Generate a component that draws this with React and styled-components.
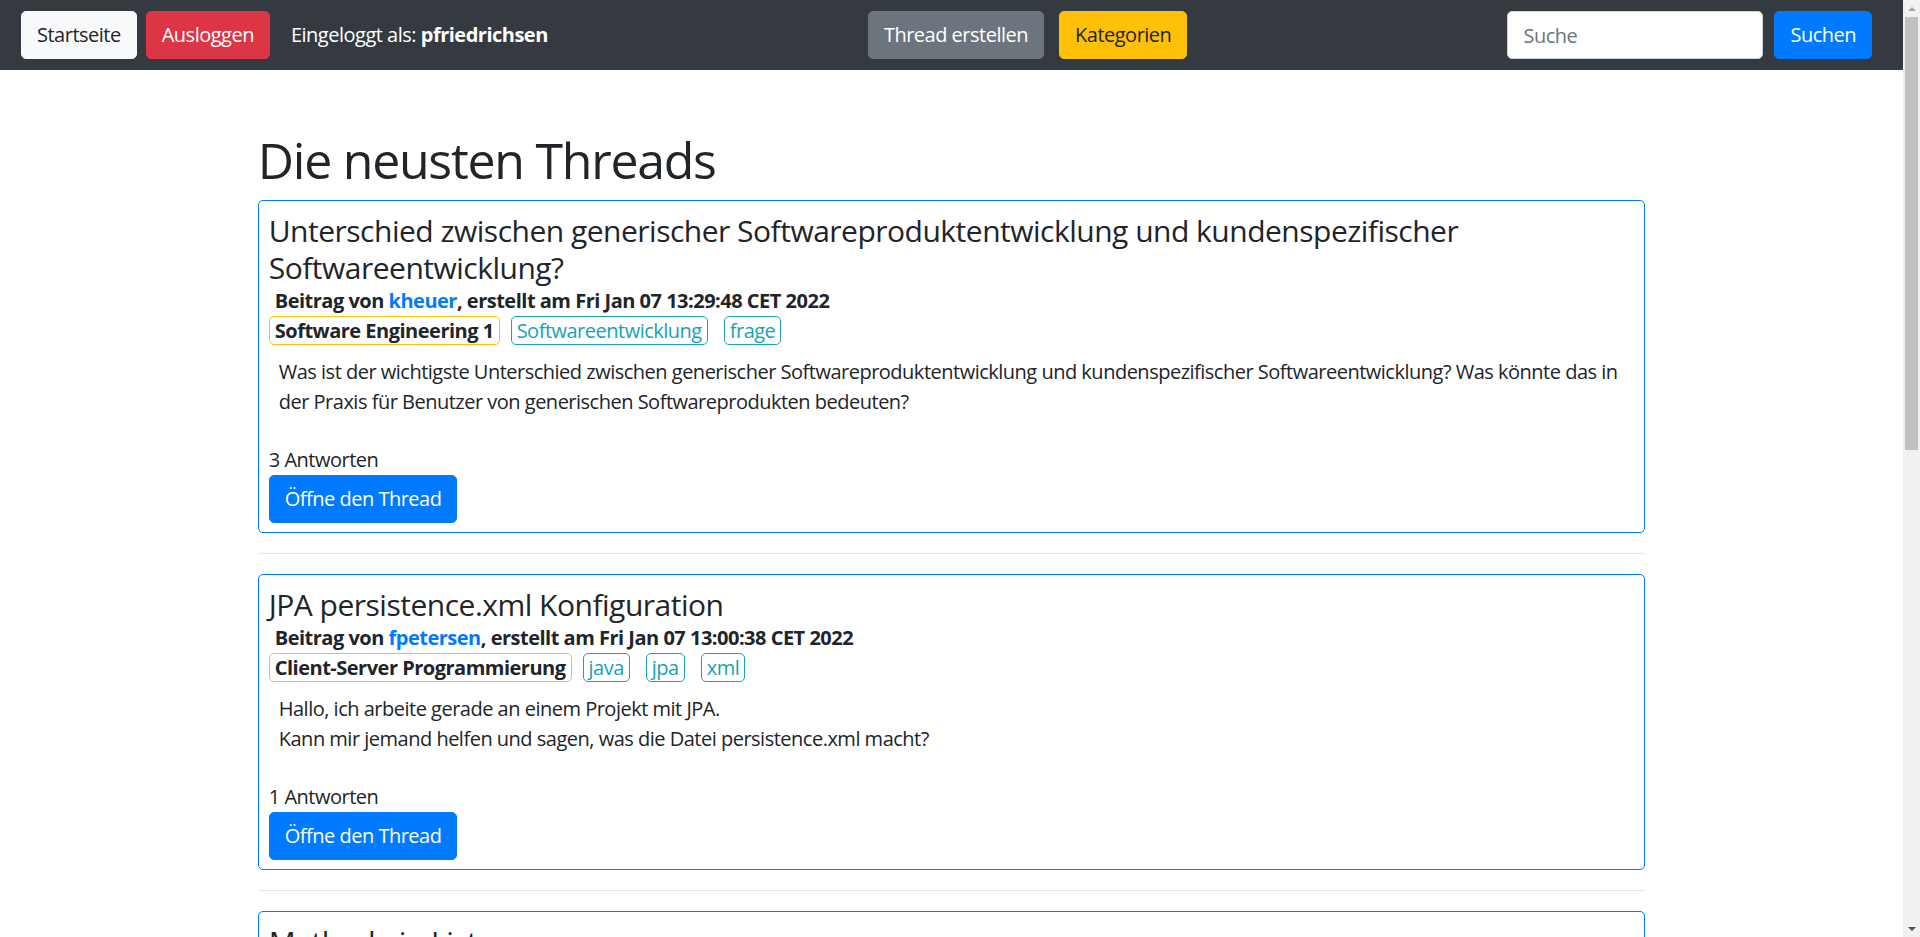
import React from 'react';
import styled, { createGlobalStyle } from 'styled-components';

const GlobalStyle = createGlobalStyle`
  html, body {
    margin: 0;
    height: 100%;
    overflow: hidden;
  }
  body {
    font-family: 'Open Sans', 'Liberation Sans', sans-serif;
    font-size: 20px;
    line-height: 1.5;
    letter-spacing: -0.025em;
    color: #212529;
    background: #fff;
  }
  * {
    box-sizing: border-box;
  }
`;

const colors = {
  dark: '#343a40',
  light: '#f8f9fa',
  danger: '#dc3545',
  secondary: '#6c757d',
  warning: '#ffc107',
  primary: '#007bff',
  info: '#17a2b8',
  text: '#212529',
};

const variants = {
  light: { bg: colors.light, fg: colors.text },
  danger: { bg: colors.danger, fg: '#fff' },
  secondary: { bg: colors.secondary, fg: '#fff' },
  warning: { bg: colors.warning, fg: colors.text },
  primary: { bg: colors.primary, fg: '#fff' },
};

const Window = styled.div`
  display: flex;
  height: 100vh;
`;

const Page = styled.div`
  flex: 1;
  min-width: 0;
  overflow: hidden;
`;

const Scrollbar = styled.div`
  width: 17px;
  flex-shrink: 0;
  background: #f1f1f1;
  display: flex;
  flex-direction: column;
  align-items: center;
`;

const ScrollArrow = styled.div`
  height: 17px;
  display: flex;
  align-items: center;
  justify-content: center;
  margin-top: ${p => (p.$down ? 'auto' : '0')};

  &::before {
    content: '';
    border-left: 4px solid transparent;
    border-right: 4px solid transparent;
    ${p => (p.$down ? 'border-top: 4px solid #505050;' : 'border-bottom: 4px solid #a3a3a3;')}
  }
`;

const ScrollThumb = styled.div`
  width: 13px;
  height: 433px;
  background: #c1c1c1;
`;

const Navbar = styled.nav`
  height: 70px;
  background: ${colors.dark};
  display: flex;
  align-items: center;
  justify-content: space-between;
  padding: 0 31px 0 21px;
`;

const NavGroup = styled.div`
  display: flex;
  align-items: center;
  gap: ${p => p.$gap}px;
`;

const Button = styled.button`
  height: 48px;
  padding: 0 15px;
  border: 1px solid ${p => variants[p.$variant].bg};
  border-radius: 5px;
  background: ${p => variants[p.$variant].bg};
  color: ${p => variants[p.$variant].fg};
  font-family: inherit;
  font-size: 20px;
  letter-spacing: -0.025em;
  line-height: 30px;
  cursor: pointer;
  white-space: nowrap;
`;

const NavText = styled.span`
  color: #fff;
  margin-left: 12px;
  white-space: nowrap;

  b {
    font-weight: 700;
  }
`;

const SearchInput = styled.input`
  width: 256px;
  height: 48px;
  padding: 0 15px;
  border: 1px solid #ced4da;
  border-radius: 5px;
  font-family: inherit;
  font-size: 20px;
  letter-spacing: -0.025em;
  color: #495057;

  &::placeholder {
    color: #6c757d;
  }
`;

const Container = styled.main`
  max-width: 1425px;
  margin: 0 auto;
  padding: 60px 18.75px 0;
`;

const PageTitle = styled.h1`
  font-size: 50px;
  font-weight: 500;
  line-height: 60px;
  margin: 0 0 10px;
  letter-spacing: -0.025em;
`;

const Card = styled.article`
  border: 1px solid ${colors.primary};
  border-radius: 5px;
  padding: 11px 10px 9px;
`;

const ThreadTitle = styled.h4`
  font-size: 30px;
  font-weight: 500;
  line-height: 37px;
  margin: 0;
`;

const Meta = styled.div`
  font-weight: 700;
  padding-left: 6px;

  a {
    color: ${colors.primary};
    text-decoration: none;
  }
`;

const TagRow = styled.div`
  display: flex;
  align-items: center;
`;

const Badge = styled.span`
  line-height: 27px;
  padding: 0 5px;
  border-radius: 5px;
  border: 1px solid ${colors.info};
  color: ${colors.info};
  margin-right: 16px;
`;

const CategoryBadge = styled(Badge)`
  border-color: ${colors.warning};
  color: ${colors.text};
  font-weight: 700;
  margin-right: 11px;
`;

const Body = styled.div`
  padding: 12px 10px 0;
`;

const Answers = styled.div`
  margin-top: 28px;
`;

const Divider = styled.hr`
  border: 0;
  border-top: 1px solid rgba(0, 0, 0, 0.1);
  margin: 20px 0;
`;

const threads = [
  {
    title: 'Unterschied zwischen generischer Softwareproduktentwicklung und kundenspezifischer Softwareentwicklung?',
    author: 'kheuer',
    date: 'Fri Jan 07 13:29:48 CET 2022',
    category: 'Software Engineering 1',
    tags: ['Softwareentwicklung', 'frage'],
    body: [
      'Was ist der wichtigste Unterschied zwischen generischer Softwareproduktentwicklung und kundenspezifischer Softwareentwicklung? Was könnte das in der Praxis für Benutzer von generischen Softwareprodukten bedeuten?',
    ],
    answers: 3,
  },
  {
    title: 'JPA persistence.xml Konfiguration',
    author: 'fpetersen',
    date: 'Fri Jan 07 13:00:38 CET 2022',
    category: 'Client-Server Programmierung',
    tags: ['java', 'jpa', 'xml'],
    body: [
      'Hallo, ich arbeite gerade an einem Projekt mit JPA.',
      'Kann mir jemand helfen und sagen, was die Datei persistence.xml macht?',
    ],
    answers: 1,
  },
  {
    title: 'Methode in Liste',
    author: '',
    date: '',
    category: '',
    tags: [],
    body: [],
    answers: null,
  },
];

const Thread = ({ thread }) => (
  <Card>
    <ThreadTitle>{thread.title}</ThreadTitle>
    {thread.author && (
      <>
        <Meta>
          Beitrag von <a href="#">{thread.author}</a>, erstellt am {thread.date}
        </Meta>
        <TagRow>
          <CategoryBadge>{thread.category}</CategoryBadge>
          {thread.tags.map(tag => (
            <Badge key={tag}>{tag}</Badge>
          ))}
        </TagRow>
        <Body>
          {thread.body.map((line, i) => (
            <React.Fragment key={i}>
              {i > 0 && <br />}
              {line}
            </React.Fragment>
          ))}
        </Body>
        <Answers>{thread.answers} Antworten</Answers>
        <Button $variant="primary">Öffne den Thread</Button>
      </>
    )}
  </Card>
);

export default function App() {
  return (
    <>
      <GlobalStyle />
      <Window>
        <Page>
          <Navbar>
            <NavGroup $gap={9}>
              <Button $variant="light">Startseite</Button>
              <Button $variant="danger">Ausloggen</Button>
              <NavText>
                Eingeloggt als: <b>pfriedrichsen</b>
              </NavText>
            </NavGroup>
            <NavGroup $gap={15}>
              <Button $variant="secondary">Thread erstellen</Button>
              <Button $variant="warning">Kategorien</Button>
            </NavGroup>
            <NavGroup $gap={11}>
              <SearchInput placeholder="Suche" />
              <Button $variant="primary">Suchen</Button>
            </NavGroup>
          </Navbar>
          <Container>
            <PageTitle>Die neusten Threads</PageTitle>
            {threads.map((thread, i) => (
              <React.Fragment key={thread.title}>
                {i > 0 && <Divider />}
                <Thread thread={thread} />
              </React.Fragment>
            ))}
          </Container>
        </Page>
        <Scrollbar>
          <ScrollArrow />
          <ScrollThumb />
          <ScrollArrow $down />
        </Scrollbar>
      </Window>
    </>
  );
}
